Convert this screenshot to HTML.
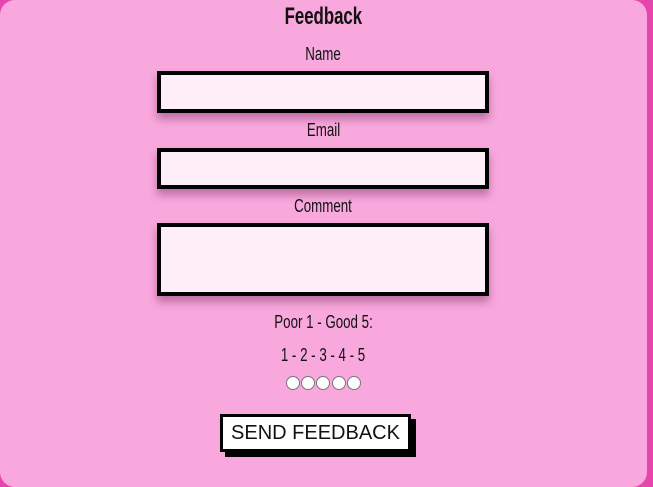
<!DOCTYPE html>
<html><head><style>
html,body{margin:0;padding:0;width:653px;height:487px;overflow:hidden;background:#e645ae;}
.card{position:absolute;left:0;top:0;width:647px;height:487px;background:#f8a8dc;border-radius:15px;font-family:"Liberation Sans","DejaVu Sans",sans-serif;color:#111;}
.t{position:absolute;left:0;width:647px;text-align:center;}
.t span{display:inline-block;transform:scaleX(0.74);transform-origin:center;}
.in{position:absolute;left:157px;width:324px;background:#fdeef8;border:4px solid #000;box-shadow:0 6px 8px rgba(120,40,90,.45);}
.btn{position:absolute;left:220px;top:414px;width:185px;height:32px;background:#fff;border:3px solid #000;box-shadow:5px 5px 0 #000;font-family:"Liberation Sans",sans-serif;font-size:20px;line-height:32px;text-align:center;color:#111;}
.r{position:absolute;top:376px;width:12px;height:12px;border-radius:50%;background:#fff;border:1px solid #777;}
</style></head><body>
<div class="card">
<div class="t" style="top:3px;font-size:24px;font-weight:bold;"><span style="transform:scaleX(0.7)">Feedback</span></div>
<div class="t" style="top:44px;font-size:18px;"><span>Name</span></div>
<div class="in" style="top:71px;height:34px"></div>
<div class="t" style="top:120px;font-size:18px;"><span>Email</span></div>
<div class="in" style="top:148px;height:33px"></div>
<div class="t" style="top:196px;font-size:18px;"><span>Comment</span></div>
<div class="in" style="top:223px;height:65px"></div>
<div class="t" style="top:312px;font-size:18px;"><span>Poor 1 - Good 5:</span></div>
<div class="t" style="top:345px;font-size:18px;"><span>1 - 2 - 3 - 4 - 5</span></div>
<div class="r" style="left:286px"></div><div class="r" style="left:301px"></div><div class="r" style="left:316px"></div><div class="r" style="left:332px"></div><div class="r" style="left:347px"></div>
<div class="btn">SEND FEEDBACK</div>
</div>
</body></html>
